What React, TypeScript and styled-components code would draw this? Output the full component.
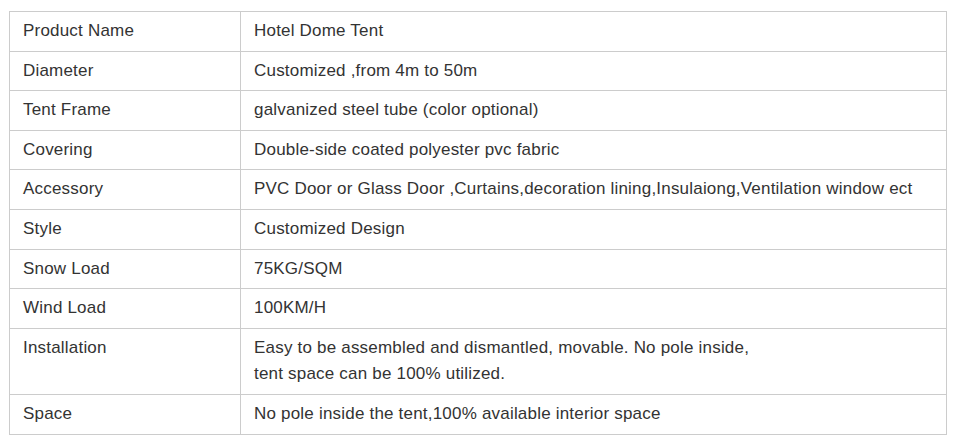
import React from "react";
import styled, { createGlobalStyle } from "styled-components";

const Global = createGlobalStyle`
  html, body { margin: 0; padding: 0; background: #fff; }
  body { font-family: "Liberation Sans", Arial, sans-serif; }
`;

const Wrap = styled.div`
  padding: 11px 0 0 9px;
`;

const Table = styled.table`
  width: 938px;
  border-collapse: collapse;
  table-layout: fixed;
  font-size: 17px;
  letter-spacing: 0.2px;
  color: #333;
`;

const Cell = styled.td<{ $label?: boolean }>`
  border: 1px solid #ccc;
  padding: 6px 13px;
  line-height: 26.6px;
  vertical-align: top;
  text-align: left;
  width: ${(p) => (p.$label ? "204px" : "auto")};
`;

const rows: [string, React.ReactNode][] = [
  ["Product Name", "Hotel Dome Tent"],
  ["Diameter", "Customized ,from 4m to 50m"],
  ["Tent Frame", "galvanized steel tube (color optional)"],
  ["Covering", "Double-side coated polyester pvc fabric"],
  [
    "Accessory",
    "PVC Door or Glass Door ,Curtains,decoration lining,Insulaiong,Ventilation window ect",
  ],
  ["Style", "Customized Design"],
  ["Snow Load", "75KG/SQM"],
  ["Wind Load", "100KM/H"],
  [
    "Installation",
    <>
      Easy to be assembled and dismantled, movable. No pole inside,
      <br />
      tent space can be 100% utilized.
    </>,
  ],
  ["Space", "No pole inside the tent,100% available interior space"],
];

export default function App() {
  return (
    <Wrap>
      <Global />
      <Table>
        <tbody>
          {rows.map(([k, v]) => (
            <tr key={k}>
              <Cell $label>{k}</Cell>
              <Cell>{v}</Cell>
            </tr>
          ))}
        </tbody>
      </Table>
    </Wrap>
  );
}
